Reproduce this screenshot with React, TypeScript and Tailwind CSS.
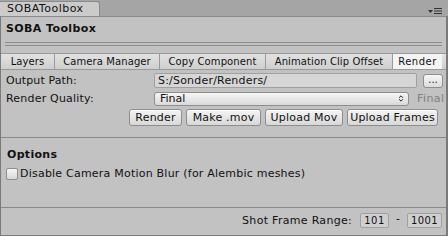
import { ChevronsUpDown } from "lucide-react";

const font = { fontFamily: '"DejaVu Sans", Verdana, sans-serif' };

function Btn({ label, w }: { label: string; w: string }) {
  return (
    <button
      className={`h-[17px] ${w} rounded-[3px] border border-[#8e8e8e] bg-gradient-to-b from-[#f4f4f4] to-[#d8d8d8] text-[11px] leading-[15px] tracking-[0.2px] text-[#111] shadow-[inset_0_1px_0_#ffffff]`}
    >
      {label}
    </button>
  );
}

const tabs = ["Layers", "Camera Manager", "Copy Component", "Animation Clip Offset", "Render"];
const tabWidths = ["w-[54px]", "w-[105px]", "w-[106px]", "w-[127px]", "w-[49px]"];

export default function App() {
  return (
    <div className="w-[448px] h-[236px] bg-[#a5a5a5] flex flex-col text-[#111] overflow-hidden" style={font}>
      {/* window tab strip */}
      <div className="h-[16px] flex items-end justify-between shrink-0">
        <div className="h-[15px] w-[100px] bg-[#cbcbcb] border-t border-r border-[#8a8a8a] rounded-tr-[3px] text-[11px] leading-[14px] pl-[7px] tracking-[0.5px]">
          SOBAToolbox
        </div>
        <div className="flex items-center gap-[1px] mr-[6px] mb-[2px]">
          <svg width="5" height="3" viewBox="0 0 5 3">
            <path d="M0 0h5L2.5 3z" fill="#333" />
          </svg>
          <svg width="8" height="6" viewBox="0 0 8 6">
            <path d="M0 0.5h8M0 3h8M0 5.5h8" stroke="#333" strokeWidth="1" />
          </svg>
        </div>
      </div>

      {/* panel */}
      <div className="flex-1 bg-[#c2c2c2] border-t border-[#8a8a8a] border-l border-r-2 border-b border-l-[#7a7a7a] border-r-[#7a7a7a] border-b-[#7a7a7a] flex flex-col">
        <div className="h-[24px] pl-[5px] pt-[5px] text-[11px] font-bold leading-[14px] tracking-[0.4px]">SOBA Toolbox</div>

        <div className="mx-[4px] mt-[1px] h-[4px] border-t border-b border-[#8d8d8d]" />

        {/* toolbar */}
        <div className="mt-[7px] h-[17px] flex border-t border-b border-[#9a9a9a] bg-gradient-to-b from-[#e2e2e2] to-[#cfcfcf]">
          {tabs.map((t, i) => (
            <div
              key={t}
              className={`${tabWidths[i]} h-full text-[10px] leading-[15px] text-center tracking-[0.1px] ${
                i === tabs.length - 1 ? "bg-[#f4f4f4] tracking-[0.5px]" : "border-r border-[#9a9a9a]"
              }`}
            >
              {t}
            </div>
          ))}
        </div>

        {/* output path */}
        <div className="mt-[2px] h-[17px] flex items-center pl-[5px] pr-[3px]">
          <div className="w-[148px] text-[11px] leading-[14px] tracking-[0.1px]">Output Path:</div>
          <div className="w-[263px] h-[15px] border border-[#a0a0a0] bg-[#d6d6d6] rounded-[2px] text-[11px] leading-[13px] pl-[3px] tracking-[0.2px]">
            S:/Sonder/Renders/
          </div>
          <div className="ml-[6px] w-[20px] h-[14px] rounded-[3px] border border-[#8e8e8e] bg-gradient-to-b from-[#f6f6f6] to-[#dcdcdc] text-[10px] leading-[10px] text-center">
            ...
          </div>
        </div>

        {/* render quality */}
        <div className="mt-[1px] h-[17px] flex items-center pl-[5px]">
          <div className="w-[148px] text-[11px] leading-[14px] tracking-[0.2px]">Render Quality:</div>
          <div className="w-[255px] h-[14px] border border-[#8e8e8e] rounded-[3px] bg-gradient-to-b from-[#f6f6f6] to-[#dadada] flex items-center justify-between pl-[5px] pr-[3px] text-[11px] leading-[12px]">
            <span>Final</span>
            <ChevronsUpDown className="w-[8px] h-[9px] text-[#222]" strokeWidth={3} />
          </div>
          <div className="ml-[8px] text-[11px] leading-[14px] text-[#808080] tracking-[0.4px]">Final</div>
        </div>

        {/* action buttons */}
        <div className="mt-[2px] flex justify-end gap-[4px] pr-[8px]">
          <Btn label="Render" w="w-[53px]" />
          <Btn label="Make .mov" w="w-[75px]" />
          <Btn label="Upload Mov" w="w-[78px]" />
          <Btn label="Upload Frames" w="w-[91px]" />
        </div>

        <div className="mt-[11px] h-[1px] bg-[#8a8a8a]" />

        <div className="mt-[10px] pl-[6px] text-[11px] font-bold leading-[14px] tracking-[0.3px]">Options</div>

        <div className="mt-[5px] flex items-center pl-[5px] h-[14px]">
          <div className="w-[12px] h-[12px] rounded-[2px] border border-[#8e8e8e] bg-gradient-to-b from-[#f6f6f6] to-[#d6d6d6]" />
          <span className="ml-[2px] text-[11px] leading-[14px] tracking-[0.22px]">Disable Camera Motion Blur (for Alembic meshes)</span>
        </div>

        <div className="mt-[26px] h-[1px] bg-[#8a8a8a]" />

        <div className="flex-1 flex items-center justify-end pr-[4px] pb-[2px]">
          <span className="text-[11px] leading-[14px] mr-[8px] tracking-[0.3px]">Shot Frame Range:</span>
          <div className="w-[29px] h-[15px] border border-[#a0a0a0] bg-[#cfcfcf] rounded-[2px] text-[10px] leading-[13px] text-center tracking-[0.4px]">
            101
          </div>
          <span className="mx-[7px] text-[11px] leading-[14px] -mt-[4px]">-</span>
          <div className="w-[35px] h-[15px] border border-[#a0a0a0] bg-[#cfcfcf] rounded-[2px] text-[10px] leading-[13px] text-center tracking-[0.4px]">
            1001
          </div>
        </div>
      </div>
    </div>
  );
}
